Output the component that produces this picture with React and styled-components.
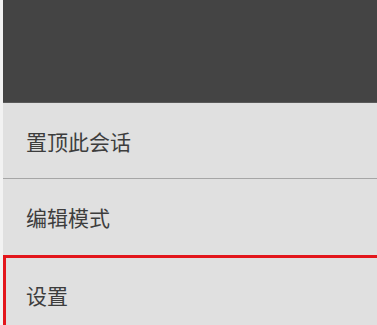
import React from "react";
import styled, { createGlobalStyle } from "styled-components";

const Global = createGlobalStyle`
  html, body { margin: 0; padding: 0; background: #f2f2f2; }
  body { font-family: "Noto Sans CJK SC", "Noto Sans", sans-serif; }
`;

const Screen = styled.div`
  width: 377px;
  height: 325px;
  overflow: hidden;
  padding-left: 3px;
  box-sizing: border-box;
  background: #f2f2f2;
`;

const Header = styled.div`
  height: 102px;
  background: #444444;
  border-bottom: 1px solid #5a5a5a;
`;

const Menu = styled.div`
  display: flex;
  flex-direction: column;
  background: #e0e0e0;
`;

const Item = styled.div`
  height: 76px;
  display: flex;
  align-items: center;
  padding-left: 23px;
  font-size: 21px;
  color: #3d3d3d;
  background: #e0e0e0;
  box-sizing: border-box;
  border-bottom: ${(p) => (p.$divider ? "1px solid #a6a6a6" : "none")};
  ${(p) =>
    p.$selected &&
    `
    border: 3px solid #e3161c;
    border-right: none;
    padding-left: 20px;
    height: 80px;
  `}
`;

export default function App() {
  return (
    <>
      <Global />
      <Screen>
        <Header />
        <Menu>
          <Item $divider>置顶此会话</Item>
          <Item>编辑模式</Item>
          <Item $selected>设置</Item>
        </Menu>
      </Screen>
    </>
  );
}
